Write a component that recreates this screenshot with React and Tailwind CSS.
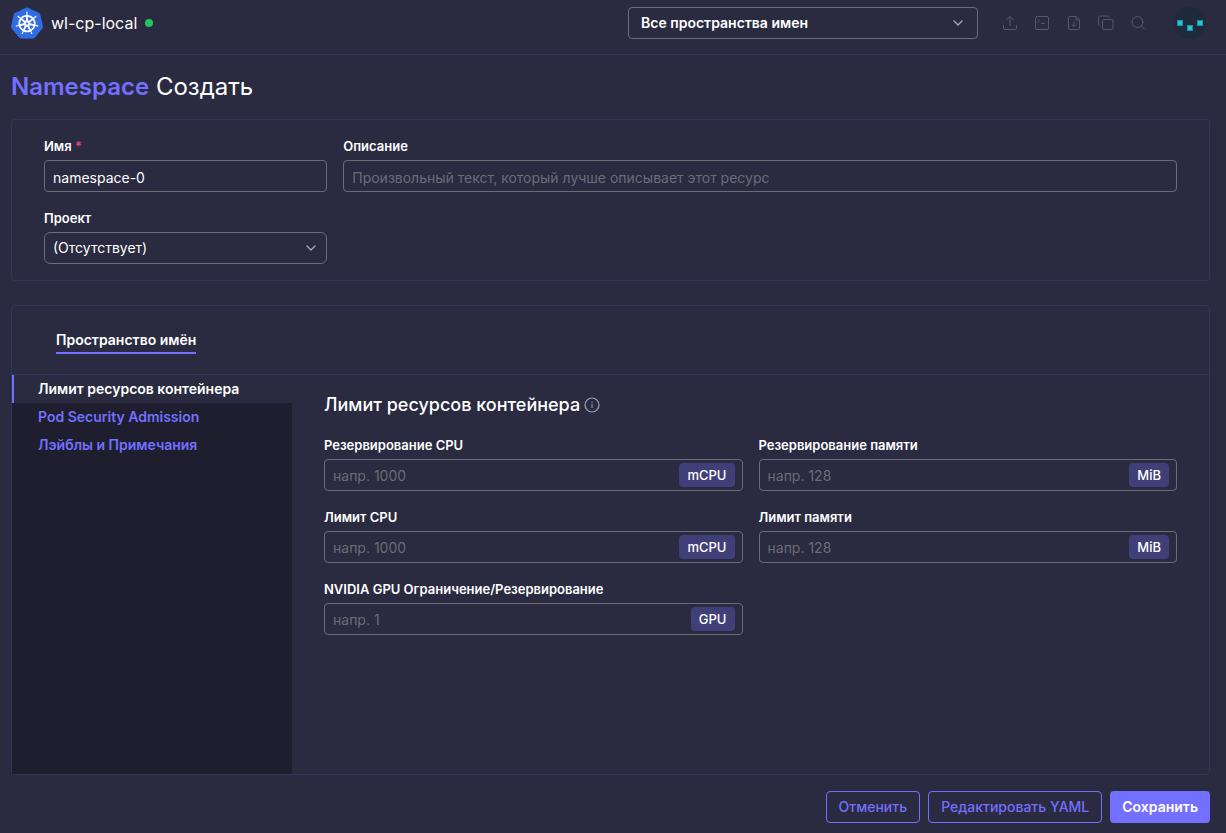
import React, { useState } from 'react'
import { SiKubernetes } from 'react-icons/si'
import { ChevronDown } from 'lucide-react'

const inputClass =
  'h-8 w-full rounded-sm border border-[#6c6c76] bg-transparent px-2 pt-0.5 text-sm text-white outline-none placeholder:text-[#6c6c76]'

const sections = [
  'Лимит ресурсов контейнера',
  'Pod Security Admission',
  'Лэйблы и Примечания',
]

const limits = [
  { id: 'cpu-reservation', label: 'Резервирование CPU', placeholder: 'напр. 1000', unit: 'mCPU' },
  { id: 'memory-reservation', label: 'Резервирование памяти', placeholder: 'напр. 128', unit: 'MiB' },
  { id: 'cpu-limit', label: 'Лимит CPU', placeholder: 'напр. 1000', unit: 'mCPU' },
  { id: 'memory-limit', label: 'Лимит памяти', placeholder: 'напр. 128', unit: 'MiB' },
  { id: 'gpu-limit', label: 'NVIDIA GPU Ограничение/Резервирование', placeholder: 'напр. 1', unit: 'GPU' },
]

const Icon = ({ children }) => (
  <svg
    className="size-4"
    viewBox="0 0 16 16"
    fill="none"
    stroke="currentColor"
    strokeLinecap="round"
    strokeLinejoin="round"
    aria-hidden="true"
  >
    {children}
  </svg>
)

const actions = [
  {
    name: 'Импорт YAML',
    icon: (
      <Icon>
        <path d="M1.5 10.5v2.500a1.500 1.500 0 0 0 1.500 1.500h10a1.500 1.500 0 0 0 1.500-1.500v-2.500M8 10.500V1.500M4.700 4.800L8 1.500l3.300 3.300" />
      </Icon>
    ),
  },
  {
    name: 'Kubectl Shell',
    icon: (
      <Icon>
        <rect x="1.500" y="1.500" width="13" height="13" rx="1.500" />
        <path d="M4 4.500l1.500 1.500L4 7.500M7.500 8.500h3" />
      </Icon>
    ),
  },
  {
    name: 'Скачать KubeConfig',
    icon: (
      <Icon>
        <path d="M10 1.500H4A1.500 1.500 0 0 0 2.500 3v10A1.500 1.500 0 0 0 4 14.500h8a1.500 1.500 0 0 0 1.500-1.500V5L10 1.500V5h3.500M8 7.500v4M6.300 10L8 11.700 9.700 10" />
      </Icon>
    ),
  },
  {
    name: 'Копировать KubeConfig',
    icon: (
      <Icon>
        <rect x="4.500" y="4.500" width="10.500" height="10" rx="1.500" />
        <path d="M1.500 10.500A1.500 1.500 0 0 1 .5 9V2.500A1.500 1.500 0 0 1 2 1h7.500A1.500 1.500 0 0 1 11 2" />
      </Icon>
    ),
  },
  {
    name: 'Поиск ресурсов',
    icon: (
      <Icon>
        <circle cx="7.500" cy="7" r="5.500" />
        <path d="M11.500 11l3 3" />
      </Icon>
    ),
  },
]

const Select = ({ id, label, className, chevronClass, options }) => (
  <div className="relative">
    <select
      id={id}
      aria-label={label}
      className={`h-8 w-full appearance-none border border-[#6c6c76] bg-[#2a2a40] text-sm text-white outline-none ${className}`}
    >
      {options.map((option) => (
        <option key={option}>{option}</option>
      ))}
    </select>
    <ChevronDown
      className={`pointer-events-none absolute top-2 size-4 text-[#a9a9b4] ${chevronClass}`}
      strokeWidth={2}
    />
  </div>
)

const Header = () => (
  <header className="flex items-center border-b border-[#35345c] pt-[7px] pb-[15px] pl-[11px] pr-5">
    <div className="flex flex-1 items-center gap-2">
      <span className="relative flex size-8 items-center justify-center">
        <span className="absolute size-6 rounded-full bg-white" />
        <SiKubernetes className="relative size-8 text-[#326ce5]" />
      </span>
      <span className="text-base text-white">wl-cp-local</span>
      <span className="size-2 rounded-full bg-[#22c55e]" />
    </div>
    <div className="w-[350px]">
      <Select
        id="namespace-filter"
        label="Фильтр пространств имен"
        className="rounded-sm px-3 font-semibold"
        chevronClass="right-3"
        options={['Все пространства имен']}
      />
    </div>
    <div className="ml-6 flex gap-4 text-[#58576a]">
      {actions.map((action) => (
        <button key={action.name} type="button" aria-label={action.name}>
          {action.icon}
        </button>
      ))}
    </div>
    <button type="button" aria-label="Профиль" className="ml-7 size-8">
      <svg viewBox="0 0 32 32" className="size-8">
        <circle cx="16" cy="16" r="16" fill="#1f2b3b" />
        <g fill="#26c6da" stroke="#1e8fa3">
          <rect x="3.500" y="13.500" width="5" height="5" />
          <rect x="13.500" y="18.500" width="5" height="5" />
          <rect x="23.500" y="13.500" width="5" height="5" />
        </g>
      </svg>
    </button>
  </header>
)

const Label = ({ htmlFor, children }) => (
  <label htmlFor={htmlFor} className="mb-1 block text-[13px] leading-5 font-semibold text-white">
    {children}
  </label>
)

const LimitField = ({ id, label, placeholder, unit }) => (
  <div>
    <Label htmlFor={id}>{label}</Label>
    <div className="flex h-8 items-center rounded-sm border border-[#6c6c76] pl-2 pr-[7px]">
      <input
        id={id}
        type="text"
        placeholder={placeholder}
        className="min-w-0 flex-1 bg-transparent pt-0.5 text-sm text-white outline-none placeholder:text-[#6c6c76]"
      />
      <span className="rounded-sm bg-[#403f78] px-2 py-0.5 text-[13px] leading-5 font-medium text-white">
        {unit}
      </span>
    </div>
  </div>
)

const App = () => {
  const [active, setActive] = useState(sections[0])
  const [name, setName] = useState('namespace-0')

  return (
    <div className="flex min-h-screen flex-col bg-[#2a2a40] font-[Inter,sans-serif] text-sm">
      <Header />
      <main className="flex flex-1 flex-col pt-4 pr-4 pb-2.5 pl-[11px]">
        <h1 className="mb-4 text-2xl text-white">
          <a href="#namespaces" className="font-semibold text-[#7370ff]">Namespace</a> Создать
        </h1>

        <section className="mb-6 grid grid-cols-[25%_1fr] gap-4 rounded-sm border border-[#35345c] px-8 py-4">
          <div>
            <Label htmlFor="name">
              Имя <span className="text-[#e0458b]">*</span>
            </Label>
            <input
              id="name"
              type="text"
              className={inputClass}
              value={name}
              onChange={(e) => setName(e.target.value)}
            />
          </div>
          <div>
            <Label htmlFor="description">Описание</Label>
            <input
              id="description"
              type="text"
              className={inputClass}
              placeholder="Произвольный текст, который лучше описывает этот ресурс"
            />
          </div>
          <div>
            <Label htmlFor="project">Проект</Label>
            <Select id="project" className="rounded-md px-2" chevronClass="right-2" options={['(Отсутствует)']} />
          </div>
        </section>

        <section className="flex flex-1 flex-col rounded-sm border border-[#35345c]">
          <div className="border-b border-[#35345c] px-11 pt-6 pb-5">
            <button type="button" className="border-b-2 border-[#7370ff] pb-0.5 font-semibold text-white">
              Пространство имён
            </button>
          </div>
          <div className="flex flex-1">
            <nav className="w-[280px] bg-[#1e1e2f]">
              {sections.map((section) => (
                <button
                  key={section}
                  type="button"
                  onClick={() => setActive(section)}
                  className={
                    section === active
                      ? 'block h-7 w-full border-l-2 border-[#7370ff] bg-[#2a2a40] pl-6 text-left font-semibold text-white'
                      : 'block h-7 w-full border-l-2 border-transparent pl-6 text-left font-semibold text-[#7370ff]'
                  }
                >
                  {section}
                </button>
              ))}
            </nav>
            <div className="flex-1 px-8 pt-4">
              <h2 className="mb-4 flex items-center gap-1 text-lg font-medium text-white">
                {active}
                <svg viewBox="0 0 16 16" className="size-4 text-[#a3a3ac]" fill="none" stroke="currentColor">
                  <circle cx="8" cy="8" r="7" strokeWidth="1.200" />
                  <path d="M8 7v4M8 4.800v1.200" />
                </svg>
              </h2>
              <div className="grid grid-cols-2 gap-4">
                {limits.map((limit) => (
                  <LimitField key={limit.id} {...limit} />
                ))}
              </div>
            </div>
          </div>
        </section>

        <footer className="mt-4 flex justify-end gap-2">
          <button type="button" className="h-8 rounded-sm border border-[#7370ff] px-3 font-medium text-[#7370ff]">
            Отменить
          </button>
          <button type="button" className="h-8 rounded-sm border border-[#7370ff] px-3 font-medium text-[#7370ff]">
            Редактировать YAML
          </button>
          <button type="button" className="h-8 rounded-sm bg-[#7370ff] px-3 font-semibold text-white">
            Сохранить
          </button>
        </footer>
      </main>
    </div>
  )
}

export default App
